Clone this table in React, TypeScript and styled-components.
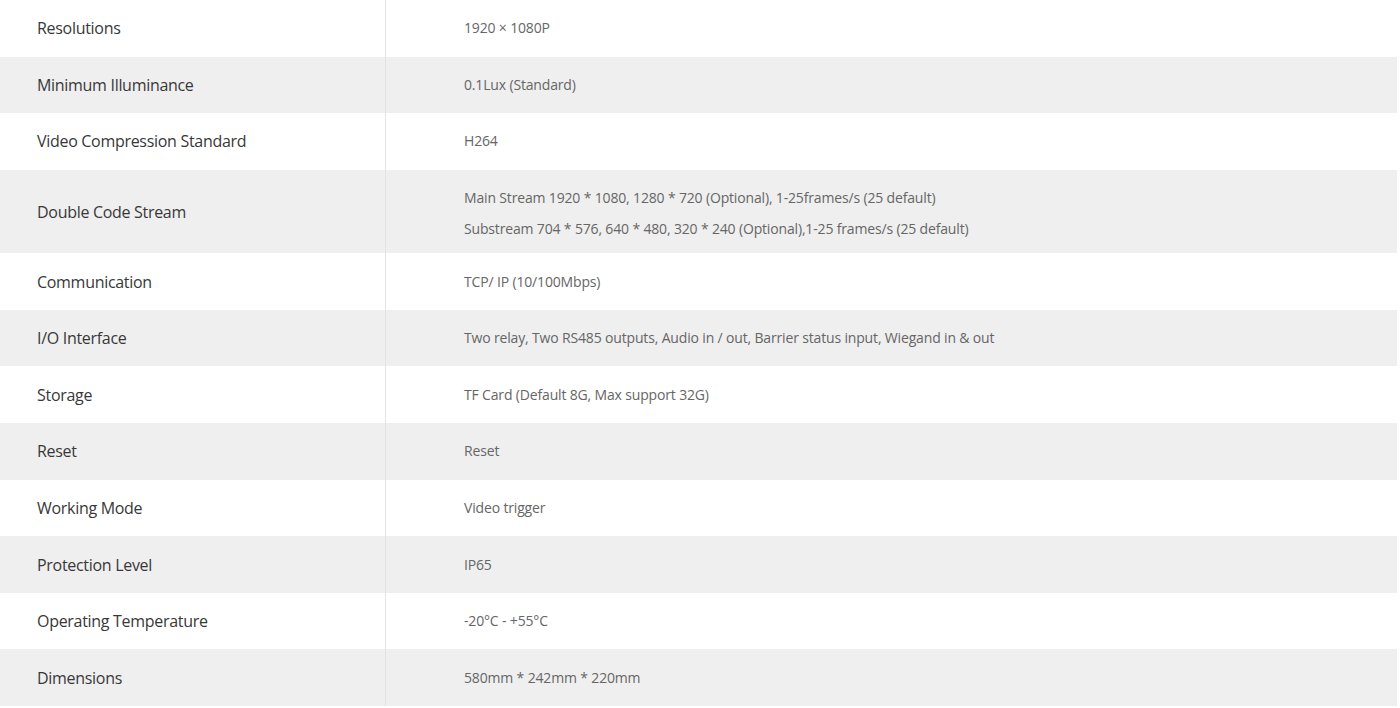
import styled, {createGlobalStyle} from 'styled-components';

const GlobalStyle = createGlobalStyle`
  html, body {
    margin: 0;
    padding: 0;
    background: #fff;
  }

  body {
    font-family: 'Open Sans', 'Liberation Sans', sans-serif;
  }
`;

type Spec = {
  label: string;
  values: string[];
};

const specs: Spec[] = [
  {label: 'Resolutions', values: ['1920 × 1080P']},
  {label: 'Minimum Illuminance', values: ['0.1Lux (Standard)']},
  {label: 'Video Compression Standard', values: ['H264']},
  {
    label: 'Double Code Stream',
    values: [
      'Main Stream 1920 * 1080, 1280 * 720 (Optional), 1-25frames/s (25 default)',
      'Substream 704 * 576, 640 * 480, 320 * 240 (Optional),1-25 frames/s (25 default)',
    ],
  },
  {label: 'Communication', values: ['TCP/ IP (10/100Mbps)']},
  {
    label: 'I/O Interface',
    values: [
      'Two relay, Two RS485 outputs, Audio in / out, Barrier status input, Wiegand in & out',
    ],
  },
  {label: 'Storage', values: ['TF Card (Default 8G, Max support 32G)']},
  {label: 'Reset', values: ['Reset']},
  {label: 'Working Mode', values: ['Video trigger']},
  {label: 'Protection Level', values: ['IP65']},
  {label: 'Operating Temperature', values: ['-20°C - +55°C']},
  {label: 'Dimensions', values: ['580mm * 242mm * 220mm']},
];

function App() {
  return (
    <>
      <GlobalStyle />
      <Table>
        {specs.map((spec, i) => (
          <Row key={spec.label} $shaded={i % 2 === 1}>
            <Label>{spec.label}</Label>
            <Value $multi={spec.values.length > 1}>
              {spec.values.map(v => (
                <Line key={v}>{v}</Line>
              ))}
            </Value>
          </Row>
        ))}
      </Table>
    </>
  );
}

const Table = styled.div`
  width: 1397px;
  display: flex;
  flex-direction: column;
`;

const Row = styled.div<{$shaded: boolean}>`
  display: flex;
  min-height: 56.6px;
  background-color: ${props => (props.$shaded ? '#efefef' : '#fff')};
`;

const Label = styled.div`
  box-sizing: border-box;
  width: 386px;
  flex-shrink: 0;
  padding-left: 37px;
  border-right: 1px solid #e3e3e3;
  display: flex;
  align-items: center;
  font-size: 16px;
  letter-spacing: -0.3px;
  color: #383838;
`;

const Value = styled.div<{$multi: boolean}>`
  flex: 1;
  padding: ${props => (props.$multi ? '15.5px 0 11px 78px' : '12.5px 0 12.5px 78px')};
  display: flex;
  flex-direction: column;
  justify-content: center;
  gap: 5px;
`;

const Line = styled.div`
  font-size: 14px;
  line-height: 26px;
  letter-spacing: -0.16px;
  color: #666;
`;

export default App;
